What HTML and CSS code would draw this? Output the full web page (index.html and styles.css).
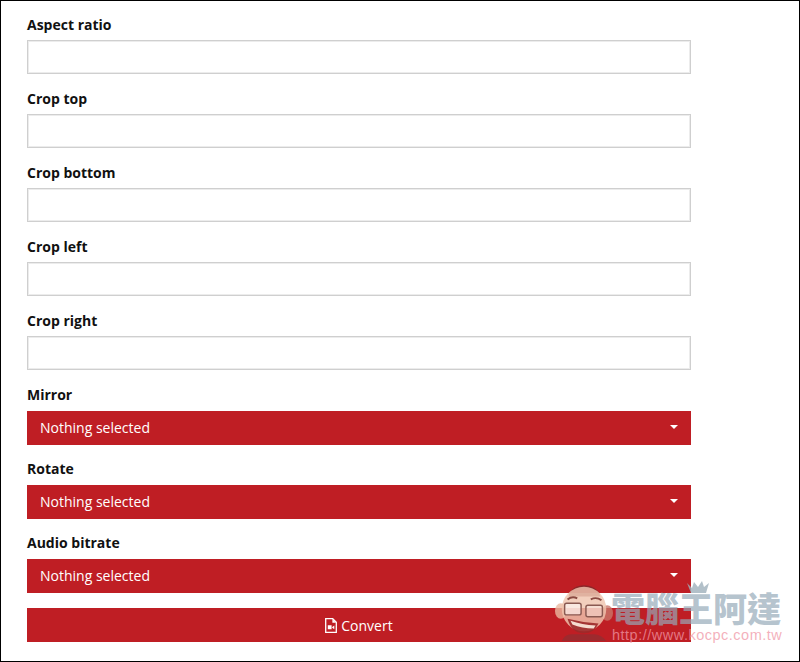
FILE: index.html
```html
<!DOCTYPE html>
<html lang="en">
<head>
  <meta charset="UTF-8" />
  <meta name="viewport" content="width=device-width,initial-scale=1.0" />
  <title>Video converter options</title>
  <link rel="stylesheet" href="styles.css">
</head>
<body>
  <main class="frame">
    <form class="options">
      <div class="field">
        <label class="field-label" for="aspect">Aspect ratio</label>
        <input class="text-input" id="aspect" type="text">
      </div>
      <div class="field">
        <label class="field-label" for="cropTop">Crop top</label>
        <input class="text-input" id="cropTop" type="text">
      </div>
      <div class="field">
        <label class="field-label" for="cropBottom">Crop bottom</label>
        <input class="text-input" id="cropBottom" type="text">
      </div>
      <div class="field">
        <label class="field-label" for="cropLeft">Crop left</label>
        <input class="text-input" id="cropLeft" type="text">
      </div>
      <div class="field">
        <label class="field-label" for="cropRight">Crop right</label>
        <input class="text-input" id="cropRight" type="text">
      </div>
      <div class="field field-select">
        <span class="field-label">Mirror</span>
        <button class="picker" type="button"><span>Nothing selected</span><i class="caret"></i></button>
      </div>
      <div class="field field-select">
        <span class="field-label">Rotate</span>
        <button class="picker" type="button"><span>Nothing selected</span><i class="caret"></i></button>
      </div>
      <div class="field field-select">
        <span class="field-label">Audio bitrate</span>
        <button class="picker" type="button"><span>Nothing selected</span><i class="caret"></i></button>
      </div>
      <button class="convert" type="button">
        <svg class="convert-icon" viewBox="0 0 12 15" aria-hidden="true">
          <path d="M.7.7h7l3.600 3.600v10H.7z" fill="none" stroke="#fff" stroke-width="1.300"/>
          <path d="M7.400 1v3.700h3.700z" fill="#fff"/>
          <path d="M2.800 7.300h3.800v4H2.800zM7.200 9.100l2.100-1.700v3.900L7.200 9.700z" fill="#fff"/>
        </svg>
        Convert
      </button>
    </form>

    <!-- site watermark, sits on top of the form -->
    <div class="watermark" aria-hidden="true">
      <svg class="wm-face" viewBox="0 0 62 62">
        <path d="M15 16C17 1 44 0 48 16z" fill="#7a2a2a" opacity=".75"/>
        <ellipse cx="7" cy="31" rx="6" ry="8" fill="#eab9a0" opacity=".8"/>
        <ellipse cx="55" cy="33" rx="6" ry="8" fill="#c9776a" opacity=".8"/>
        <circle cx="31" cy="29" r="23" fill="#efc4ae" opacity=".82"/>
        <path d="M14 19q5-4 10-1M38 19q6-3 11 1" fill="none" stroke="#8a4a42" stroke-width="2"/>
        <rect x="11" y="23" width="17" height="12" rx="2" fill="#fff" fill-opacity=".55" stroke="#8a5a52" stroke-width="1.500"/>
        <rect x="33" y="25" width="17" height="12" rx="2" fill="#fff" fill-opacity=".3" stroke="#8a5a52" stroke-width="1.500"/>
        <path d="M14 39q16 4 32 5q-5 11-17 10q-11-1-15-15z" fill="#9c2a2a" opacity=".9"/>
        <path d="M17 41q12 4 26 5l-2 3q-12 0-22-4z" fill="#f5dcd0"/>
        <path d="M8 62q3-7 10-7h24q8 1 12 7z" fill="#8f2f33" opacity=".7"/>
      </svg>
      <svg class="wm-crown" viewBox="0 0 26 14">
        <path d="M2 3l5 5 2-6 4 5 4-6 2 6 5-4-3 10H6z" fill="#9fb0bb" opacity=".8"/>
      </svg>
      <span class="wm-name">電腦王阿達</span>
      <span class="wm-url">http://www.kocpc.com.tw</span>
    </div>
  </main>
</body>
</html>
```

FILE: styles.css
```css
* { box-sizing: border-box; }
html, body { margin: 0; }
body { background: #fff; font-family: "Open Sans", "Noto Sans", sans-serif; color: #111; }

.frame {
  position: relative;
  width: 800px;
  height: 662px;
  border: 1px solid #000;
  padding: 13px 26px 0;
  overflow: hidden;
}
.options { width: 664px; }

.field { margin-bottom: 14px; }
.field-select { margin-bottom: 13px; }
.field-label {
  display: block;
  height: 26px;
  margin: 0;
  font-size: 14px;
  line-height: 22px;
  font-weight: 700;
}
.field-select .field-label { height: 27px; }
.text-input {
  display: block;
  width: 100%;
  height: 34px;
  border: 1px solid #cfcfcf;
  box-shadow: inset 0 0 0 1px #ececec;
  background: #fff;
  outline: 0;
}

.picker, .convert {
  width: 100%;
  height: 34px;
  border: 0;
  background: #bf1e24;
  color: #fff;
  font-family: inherit;
  font-size: 14px;
}
.picker {
  display: flex;
  align-items: center;
  justify-content: space-between;
  padding: 0 13px 2px;
}
.caret {
  width: 0;
  height: 0;
  border: 4px solid transparent;
  border-top-color: #fff;
  border-bottom: 0;
}
.convert {
  display: flex;
  align-items: center;
  justify-content: center;
  gap: 4px;
  margin-top: 15px;
}
.convert-icon { width: 12px; height: 15px; }

.watermark {
  position: absolute;
  left: 551px;
  top: 578px;
  width: 240px;
  height: 76px;
  pointer-events: none;
}
.wm-face { position: absolute; left: 2px; top: 2px; width: 60px; height: 60px; }
.wm-crown { position: absolute; left: 133px; top: 1px; width: 26px; height: 14px; }
.wm-name {
  position: absolute;
  left: 59px;
  top: 11px;
  font-family: "Noto Sans CJK TC", sans-serif;
  font-size: 34px;
  line-height: 36px;
  font-weight: 900;
  white-space: nowrap;
  color: rgba(150, 170, 185, .7);
}
.wm-url {
  position: absolute;
  left: 60px;
  top: 48px;
  font-family: "Liberation Sans", sans-serif;
  font-size: 14.500px;
  line-height: 16px;
  letter-spacing: .5px;
  white-space: nowrap;
  color: rgba(240, 150, 165, .75);
}
```
